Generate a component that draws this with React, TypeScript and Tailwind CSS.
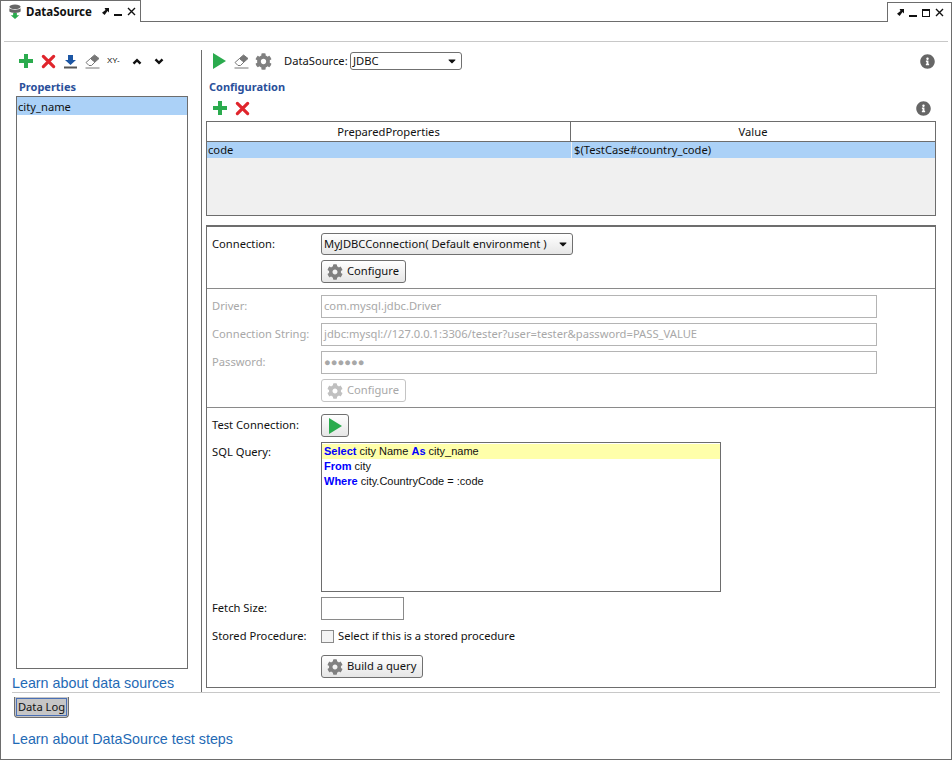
import { FaCog, FaInfoCircle, FaCaretDown } from 'react-icons/fa'

const SANS = "font-['Noto_Sans',sans-serif]"

function Plus({ className = '' }: { className?: string }) {
  return (
    <svg viewBox="0 0 16 16" className={`w-[16px] h-[16px] ${className}`}>
      <path d="M6 1h4v5h5v4h-5v5H6v-5H1V6h5z" fill="#2bab4e" />
    </svg>
  )
}

function Cross({ className = '' }: { className?: string }) {
  return (
    <svg viewBox="0 0 16 16" className={`w-[15px] h-[15px] ${className}`}>
      <path d="M2.5 2.500l11 11M13.500 2.500l-11 11" stroke="#e0252c" strokeWidth="3.4" strokeLinecap="round" fill="none" />
    </svg>
  )
}

function Play({ className = '', size = 'w-[13px] h-[16px]' }: { className?: string, size?: string }) {
  return (
    <svg viewBox="0 0 13 16" className={`${size} ${className}`}>
      <path d="M0 0l13 8-13 8z" fill="#2bab4e" />
    </svg>
  )
}

function Eraser() {
  return (
    <svg viewBox="0 0 15 15" className="w-[15px] h-[15px]">
      <path d="M1 8.500L5.500 4.500l4.500 3.500-3.500 3.500H4z" fill="#fff" stroke="#777" strokeWidth="1" />
      <path d="M5.500 4.500L9.500 1 14 4.500 10 8z" fill="#777" stroke="#777" strokeWidth="1" />
      <path d="M0.500 14h14" stroke="#777" strokeWidth="1" />
    </svg>
  )
}

function PinIcon() {
  return (
    <svg viewBox="0 0 8 8" className="w-[7px] h-[7px]">
      <path d="M3 0h5v5L6.300 3.400 3 8 0 5.500l4-3.300z" fill="#111" />
    </svg>
  )
}

function Minimize() {
  return <div className="w-[8px] h-[2px] mt-[6px] bg-[#111]" />
}

function CloseIcon() {
  return (
    <svg viewBox="0 0 9 9" className="w-[9px] h-[9px]">
      <path d="M1 1l7 7M8 1L1 8" stroke="#111" strokeWidth="1.4" fill="none" />
    </svg>
  )
}

function Btn({ label, disabled }: { label: string, disabled?: boolean }) {
  return (
    <div className={`inline-flex items-center h-[23px] pl-[5px] pr-[6px] gap-[4px] rounded-[3px] border whitespace-nowrap ${disabled ? 'border-[#c4c4c4] text-[#a8a8a8] bg-white' : 'border-[#707070] text-[#111] bg-gradient-to-b from-white to-[#e6e6e6]'}`}>
      <FaCog className={`w-[16px] h-[16px] ${disabled ? 'text-[#c0c0c0]' : 'text-[#808080]'}`} />
      <span>{label}</span>
    </div>
  )
}

function FieldRow({ label, value, className = '' }: { label: string, value: string, className?: string }) {
  return (
    <div className={`flex items-center h-[23px] ${className}`}>
      <div className="w-[109px] text-[#a8a8a8]">{label}</div>
      <div className="w-[556px] h-[23px] border border-[#b4b4b4] flex items-center px-[2px] text-[#a8a8a8] whitespace-nowrap overflow-hidden">{value}</div>
    </div>
  )
}

export default function App() {
  return (
    <div className={`w-[952px] h-[760px] bg-white flex flex-col text-[#111] text-[11.200px] overflow-hidden ${SANS}`}>
      <div className="flex items-end h-[22px] shrink-0">
        <div className="w-[141px] h-[22px] border border-b-0 border-[#6d6d6d] flex items-center pl-[7px]">
          <svg viewBox="0 0 14 16" className="w-[14px] h-[15px] mr-[4px] shrink-0">
            <ellipse cx="7" cy="3" rx="6" ry="2.400" fill="#666" />
            <path d="M1 4.500c1 2 11 2 12 0V8c-1 2-11 2-12 0z" fill="#666" />
            <path d="M5 9.500h4V12h2.500L7 16l-4.500-4H5z" fill="#2bab4e" />
          </svg>
          <span className="font-bold text-[11.500px]">DataSource</span>
          <div className="flex items-center ml-[10px] gap-[5px]">
            <PinIcon />
            <Minimize />
            <CloseIcon />
          </div>
        </div>
        <div className="flex-1 border-b border-[#6d6d6d]" />
        <div className="w-[65px] h-[20px] border border-b-0 border-[#6d6d6d] flex items-center pl-[9px] gap-[5px]">
          <PinIcon />
          <Minimize />
          <div className="w-[8px] h-[8px] border border-t-2 border-[#111]" />
          <CloseIcon />
        </div>
      </div>

      <div className="flex-1 flex flex-col border-l border-r border-b border-[#6d6d6d] min-h-0">
        <div className="h-[19px] shrink-0" />
        <div className="h-px bg-[#c8c8c8] mx-[3px] shrink-0" />
        <div className="flex h-[650px] shrink-0 pt-[8px]">
          <div className="w-[201px] border-r border-[#6d6d6d] flex flex-col pl-[15px] shrink-0">
            <div className="flex items-center h-[22px] pl-[2px] gap-[7px]">
              <Plus />
              <Cross />
              <svg viewBox="0 0 15 15" className="w-[15px] h-[15px]">
                <path d="M5 1h5v5h3l-5.500 5L2 6h3z" fill="#1c56a4" />
                <path d="M1 13.500h13" stroke="#555" strokeWidth="2" />
              </svg>
              <Eraser />
              <span className="text-[8px] w-[16px] font-['Liberation_Sans',sans-serif]">XY-</span>
              <svg viewBox="0 0 10 8" className="w-[10px] h-[7px] ml-[2px]"><path d="M1 6.500l4-4 4 4" stroke="#111" strokeWidth="2.800" fill="none" /></svg>
              <svg viewBox="0 0 10 8" className="w-[10px] h-[7px] ml-[5px]"><path d="M1 1.500l4 4 4-4" stroke="#111" strokeWidth="2.800" fill="none" /></svg>
            </div>
            <div className="h-[17px] mt-[6px] pl-[3px] font-bold text-[11px] text-[#2a4f9a] leading-[17px]">Properties</div>
            <div className="w-[172px] h-[573px] mt-px border border-[#6d6d6d] shrink-0">
              <div className="h-[18px] bg-[#abd1f7] px-px leading-[20px]">city_name</div>
            </div>
            <a className="block -ml-[4px] mt-[5px] text-[14.300px] leading-[18px] text-[#1f6ab5] font-['Liberation_Sans',sans-serif] whitespace-nowrap">Learn about data sources</a>
          </div>

          <div className="flex-1 min-w-0 flex flex-col pl-[5px]">
            <div className="flex items-center h-[22px] pl-[6px]">
              <Play />
              <div className="w-[8px]" />
              <Eraser />
              <FaCog className="w-[17px] h-[17px] ml-[6px] text-[#808080]" />
              <span className="ml-[12px] w-[63px]">DataSource:</span>
              <div className="ml-[3px] w-[112px] h-[18px] border border-[#707070] rounded-[3px] flex items-center justify-between pl-[2px] pr-[3px] bg-white">
                <span>JDBC</span>
                <FaCaretDown className="w-[12px] h-[12px]" />
              </div>
              <FaInfoCircle className="w-[15px] h-[15px] ml-auto mr-[16px] text-[#666]" />
            </div>
            <div className="h-[17px] mt-[6px] pl-[2px] font-bold text-[11px] text-[#2a4f9a] leading-[17px]">Configuration</div>
            <div className="flex items-center h-[18px] pl-[5px] mt-[4px] gap-[7px]">
              <Plus />
              <Cross />
              <FaInfoCircle className="w-[15px] h-[15px] ml-auto mr-[20px] text-[#666]" />
            </div>
            <div className="w-[730px] h-[95px] mt-[4px] -ml-px border border-[#6d6d6d] bg-[#f0f0f0] flex flex-col shrink-0">
              <div className="flex h-[20px] bg-white border-b border-[#6d6d6d] shrink-0">
                <div className="w-[364px] text-center border-r border-[#6d6d6d] leading-[20px]">PreparedProperties</div>
                <div className="flex-1 text-center leading-[20px]">Value</div>
              </div>
              <div className="flex h-[16px] bg-[#abd1f7] leading-[16px] shrink-0">
                <div className="w-[364px] pl-px">code</div>
                <div className="flex-1 pl-[2px] border-l border-[#f0f0f0]">$(TestCase#country_code)</div>
              </div>
            </div>

            <div className="w-[730px] h-[463px] mt-[9px] -ml-px border border-t-2 border-[#6d6d6d] shrink-0 flex flex-col">
              <div className="flex items-center h-[22px] mt-[6px] pl-[5px]">
                <div className="w-[109px]">Connection:</div>
                <div className="w-[252px] h-[22px] border border-[#707070] rounded-[3px] bg-gradient-to-b from-white to-[#e6e6e6] flex items-center justify-between pl-[2px] pr-[3px] whitespace-nowrap">
                  <span>MyJDBCConnection( Default environment )</span>
                  <FaCaretDown className="w-[12px] h-[12px]" />
                </div>
              </div>
              <div className="pl-[114px] mt-[5px] h-[23px] flex"><Btn label="Configure" /></div>
              <div className="h-px bg-[#8a8a8a] mt-[5px]" />
              <FieldRow label="Driver:" value="com.mysql.jdbc.Driver" className="mt-[6px] pl-[5px]" />
              <FieldRow label="Connection String:" value="jdbc:mysql://127.0.0.1:3306/tester?user=tester&password=PASS_VALUE" className="mt-[5px] pl-[5px]" />
              <FieldRow label="Password:" value="●●●●●●" className="mt-[5px] pl-[5px]" />
              <div className="pl-[114px] mt-[5px] h-[23px] flex"><Btn label="Configure" disabled /></div>
              <div className="h-px bg-[#8a8a8a] mt-[5px]" />
              <div className="flex items-center h-[23px] mt-[6px] pl-[5px]">
                <div className="w-[109px]">Test Connection:</div>
                <div className="w-[28px] h-[23px] border border-[#707070] rounded-[3px] bg-gradient-to-b from-white to-[#e6e6e6] flex items-center justify-center">
                  <Play />
                </div>
              </div>
              <div className="flex mt-[5px] pl-[5px]">
                <div className="w-[109px] mt-[2px]">SQL Query:</div>
                <div className="w-[400px] h-[150px] border border-[#6d6d6d] pt-px font-['Liberation_Sans',sans-serif] text-[11px] leading-[15px]">
                  <div className="bg-[#ffffaa] pl-[2px]"><b className="text-[#0000ff]">Select</b> city Name <b className="text-[#0000ff]">As</b> city_name</div>
                  <div className="pl-[2px]"><b className="text-[#0000ff]">From</b> city</div>
                  <div className="pl-[2px]"><b className="text-[#0000ff]">Where</b> city.CountryCode = :code</div>
                </div>
              </div>
              <div className="flex items-center h-[23px] mt-[5px] pl-[5px]">
                <div className="w-[109px]">Fetch Size:</div>
                <div className="w-[83px] h-[23px] border border-[#8a8a8a]" />
              </div>
              <div className="flex items-center h-[14px] mt-[9px] pl-[5px]">
                <div className="w-[109px]">Stored Procedure:</div>
                <div className="w-[13px] h-[13px] border border-[#8a8a8a] bg-[#f4f4f4] mr-[4px]" />
                <span>Select if this is a stored procedure</span>
              </div>
              <div className="pl-[114px] mt-[12px] h-[23px] flex"><Btn label="Build a query" /></div>
            </div>
          </div>
        </div>
        <div className="h-px bg-[#c8c8c8] ml-[11px] mr-[11px] shrink-0" />
        <div className="ml-[13px] mt-[4px] w-[55px] h-[21px] rounded-b-[4px] border border-t-0 border-[#6d6d6d] bg-[#c6c6c6] p-[1px] shrink-0">
          <div className="h-[18px] border border-[#4a6fb5] flex items-center justify-center leading-none whitespace-nowrap">Data Log</div>
        </div>
        <a className="block ml-[11px] mt-[12px] text-[14.300px] leading-[18px] text-[#1f6ab5] font-['Liberation_Sans',sans-serif]">Learn about DataSource test steps</a>
      </div>
    </div>
  )
}
